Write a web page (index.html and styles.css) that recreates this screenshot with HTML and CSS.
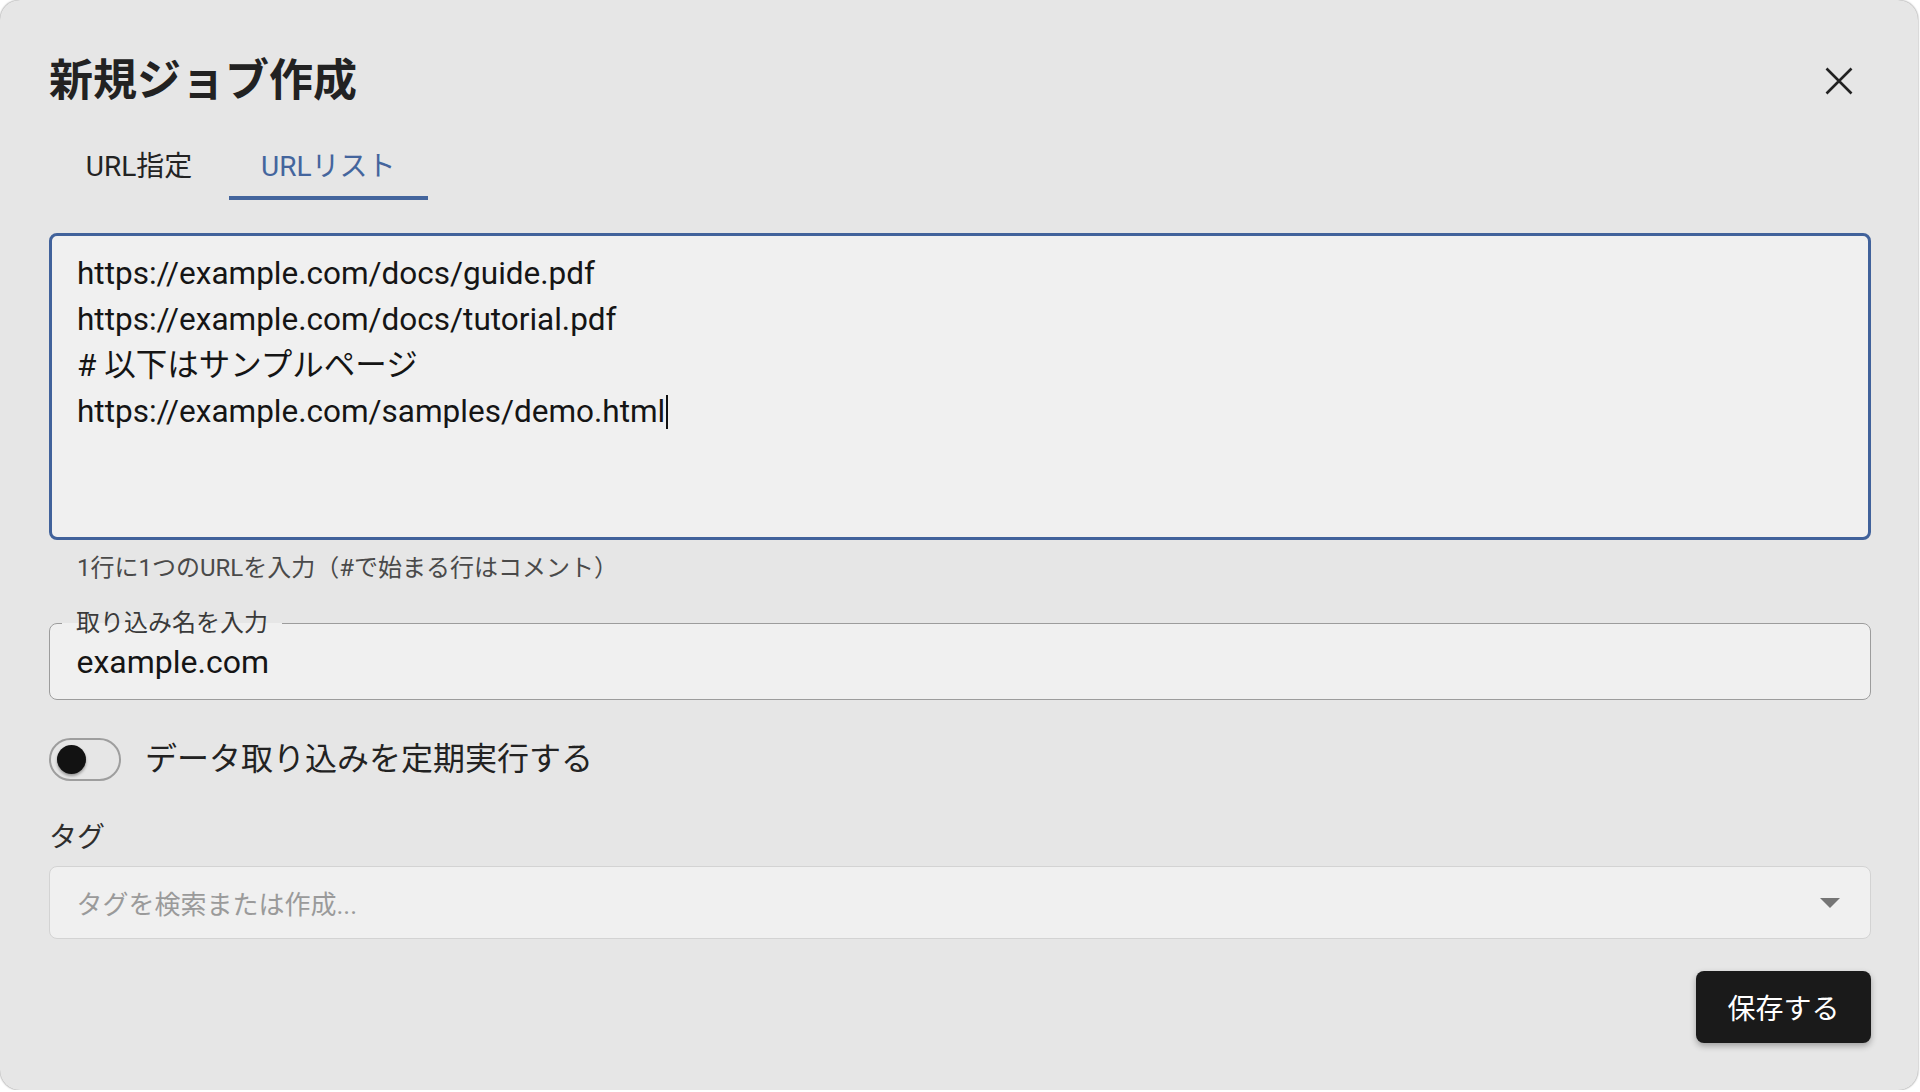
FILE: index.html
```html
<!DOCTYPE html>
<html lang="ja">
<head>
<meta charset="utf-8">
<title>新規ジョブ作成</title>
<link rel="stylesheet" href="styles.css">
</head>
<body>
<div class="dialog">
  <div class="header">
    <h1 class="title">新規ジョブ作成</h1>
    <button class="close" aria-label="閉じる">
      <svg width="28" height="28" viewBox="0 0 28 28"><path d="M1.5 1.5 L26.5 26.5 M26.5 1.5 L1.5 26.5" stroke="#222" stroke-width="2.6" fill="none"/></svg>
    </button>
  </div>
  <div class="tabs">
    <div class="tab">URL指定</div>
    <div class="tab active">URLリスト</div>
  </div>
  <div class="textarea">
    <div class="line">https://example.com/docs/guide.pdf</div>
    <div class="line">https://example.com/docs/tutorial.pdf</div>
    <div class="line"># 以下はサンプルページ</div>
    <div class="line">https://example.com/samples/demo.html<span class="caret"></span></div>
  </div>
  <div class="helper">1行に1つのURLを入力（#で始まる行はコメント）</div>
  <fieldset class="field">
    <legend>取り込み名を入力</legend>
    <div class="value">example.com</div>
  </fieldset>
  <div class="toggle-row">
    <div class="track"><div class="thumb"></div></div>
    <div class="toggle-label">データ取り込みを定期実行する</div>
  </div>
  <div class="tag-label">タグ</div>
  <div class="select">
    <span class="placeholder">タグを検索または作成...</span>
    <svg width="20" height="10" viewBox="0 0 20 10"><path d="M0 0 L20 0 L10 10 Z" fill="#757575"/></svg>
  </div>
  <div class="actions">
    <button class="save">保存する</button>
  </div>
</div>
</body>
</html>
```

FILE: styles.css
```css
* { box-sizing: border-box; }
html, body { margin: 0; padding: 0; background: #ffffff; }
body {
  font-family: Roboto, "Noto Sans CJK JP", sans-serif;
  color: #1c1c1c;
}
.dialog {
  width: 1918px;
  height: 1090px;
  background: #e6e6e6;
  border-radius: 20px;
  box-shadow: 0 0 2px rgba(0,0,0,0.55);
  padding: 51px 47px 0 49px;
  display: flex;
  flex-direction: column;
}
.header {
  height: 60px;
  display: flex;
  align-items: center;
  justify-content: space-between;
}
.title {
  margin: 0;
  font-size: 44px;
  line-height: 60px;
  font-weight: 700;
  color: #222;
}
.close {
  width: 60px;
  height: 60px;
  border: 0;
  background: transparent;
  padding: 0;
  display: flex;
  align-items: center;
  justify-content: center;
  margin-right: 2px;
}
.tabs {
  margin-top: 17px;
  height: 72px;
  display: flex;
}
.tab {
  min-width: 180px;
  padding: 0 32px;
  height: 72px;
  display: flex;
  align-items: center;
  justify-content: center;
  font-size: 28px;
  color: #232323;
  border-bottom: 4px solid transparent;
  padding-top: 4px;
}
.tab.active {
  color: #44659d;
  border-bottom-color: #44659d;
}
.textarea {
  margin-top: 33px;
  height: 307px;
  border: 3px solid #41629b;
  border-radius: 8px;
  background: #f0f0f0;
  padding: 15px 25px 0 25px;
  font-size: 31.5px;
  line-height: 46px;
  color: #151515;
}
.caret {
  display: inline-block;
  width: 2px;
  height: 34px;
  background: #111;
  vertical-align: -7px;
  margin-left: 1px;
}
.helper {
  margin-top: 8px;
  padding-left: 28px;
  font-size: 24px;
  line-height: 40px;
  color: #4a4a4a;
}
.field {
  margin: 23px 0 0 0;
  padding: 0 14px 14px 12px;
  border: 1.5px solid #9c9c9c;
  border-radius: 8px;
  background: #f0f0f0;
  min-inline-size: 0;
}
.field legend {
  padding: 0 14px;
  font-size: 24px;
  line-height: 24px;
  color: #3a3a3a;
}
.value {
  margin-top: 4px;
  padding-left: 14.5px;
  font-size: 32px;
  line-height: 46px;
  color: #151515;
}
.toggle-row {
  margin-top: 38px;
  height: 43px;
  display: flex;
  align-items: center;
}
.track {
  width: 72px;
  height: 43px;
  border: 2px solid #9e9e9e;
  border-radius: 22px;
  display: flex;
  align-items: center;
  padding-left: 6px;
}
.thumb {
  width: 29px;
  height: 29px;
  border-radius: 50%;
  background: #121212;
  box-shadow: 0 2px 3px rgba(0,0,0,0.35);
}
.toggle-label {
  margin-left: 24px;
  font-size: 32px;
  line-height: 43px;
  color: #222;
}
.tag-label {
  margin-top: 37px;
  font-size: 28px;
  line-height: 40px;
  color: #2e2e2e;
}
.select {
  margin-top: 8px;
  height: 73px;
  border: 1.5px solid #d3d3d3;
  border-radius: 8px;
  background: #f0f0f0;
  display: flex;
  align-items: center;
  justify-content: space-between;
  padding: 0 30px 0 26.5px;
}
.placeholder {
  font-size: 26px;
  color: #9a9a9a;
}
.actions {
  margin-top: 32px;
  display: flex;
  justify-content: flex-end;
}
.save {
  width: 175px;
  height: 72px;
  border: 0;
  border-radius: 8px;
  background: #1a1a1a;
  color: #fff;
  font-family: Roboto, "Noto Sans CJK JP", sans-serif;
  font-size: 28px;
  box-shadow: 0 3px 6px rgba(0,0,0,0.3);
}
```
